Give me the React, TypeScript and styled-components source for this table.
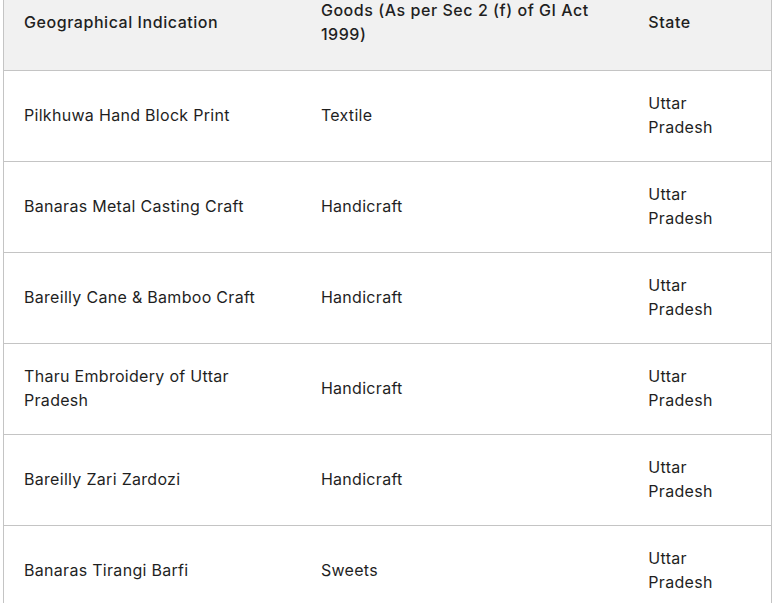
import React from "react";
import styled, { createGlobalStyle } from "styled-components";

const Global = createGlobalStyle`
  html, body { margin: 0; padding: 0; background: #ffffff; overflow: hidden; }
  body { font-family: Inter, Roboto, "Noto Sans", Arial, sans-serif; color: #1f1f1f; }
`;

const Viewport = styled.div`
  width: 777px;
  height: 603px;
  overflow: hidden;
  padding-left: 3px;
  box-sizing: border-box;
`;

const Table = styled.table`
  margin-top: -28px;
  width: 769px;
  border-collapse: collapse;
  table-layout: fixed;
  border-left: 1px solid #c4c4c4;
  border-right: 1px solid #c4c4c4;
  font-size: 16px;
  line-height: 24px;
`;

const HeadRow = styled.tr`
  background: #f1f1f1;
  border-bottom: 1px solid #c4c4c4;
`;

const HeadCell = styled.th`
  text-align: left;
  font-weight: 500;
  letter-spacing: 0.55px;
  padding: 26px 20px 24px 20px;
  vertical-align: middle;
  color: #1f1f1f;
`;

const Row = styled.tr`
  border-bottom: 1px solid #c4c4c4;
`;

const Cell = styled.td`
  padding: 20px 20px 22px 20px;
  height: 48px;
  vertical-align: middle;
  color: #1f1f1f;
  font-weight: 400;
  letter-spacing: 0.3px;
`;

const rows: [string, string, string][] = [
  ["Pilkhuwa Hand Block Print", "Textile", "Uttar Pradesh"],
  ["Banaras Metal Casting Craft", "Handicraft", "Uttar Pradesh"],
  ["Bareilly Cane & Bamboo Craft", "Handicraft", "Uttar Pradesh"],
  ["Tharu Embroidery of Uttar Pradesh", "Handicraft", "Uttar Pradesh"],
  ["Bareilly Zari Zardozi", "Handicraft", "Uttar Pradesh"],
  ["Banaras Tirangi Barfi", "Sweets", "Uttar Pradesh"],
];

export default function App() {
  return (
    <>
      <Global />
      <Viewport>
        <Table>
          <colgroup>
            <col style={{ width: 297 }} />
            <col style={{ width: 327 }} />
            <col style={{ width: 143 }} />
          </colgroup>
          <thead>
            <HeadRow>
              <HeadCell>Geographical Indication</HeadCell>
              <HeadCell>Goods (As per Sec 2 (f) of GI Act 1999)</HeadCell>
              <HeadCell>State</HeadCell>
            </HeadRow>
          </thead>
          <tbody>
            {rows.map((r) => (
              <Row key={r[0]}>
                <Cell>{r[0]}</Cell>
                <Cell>{r[1]}</Cell>
                <Cell>{r[2]}</Cell>
              </Row>
            ))}
          </tbody>
        </Table>
      </Viewport>
    </>
  );
}
